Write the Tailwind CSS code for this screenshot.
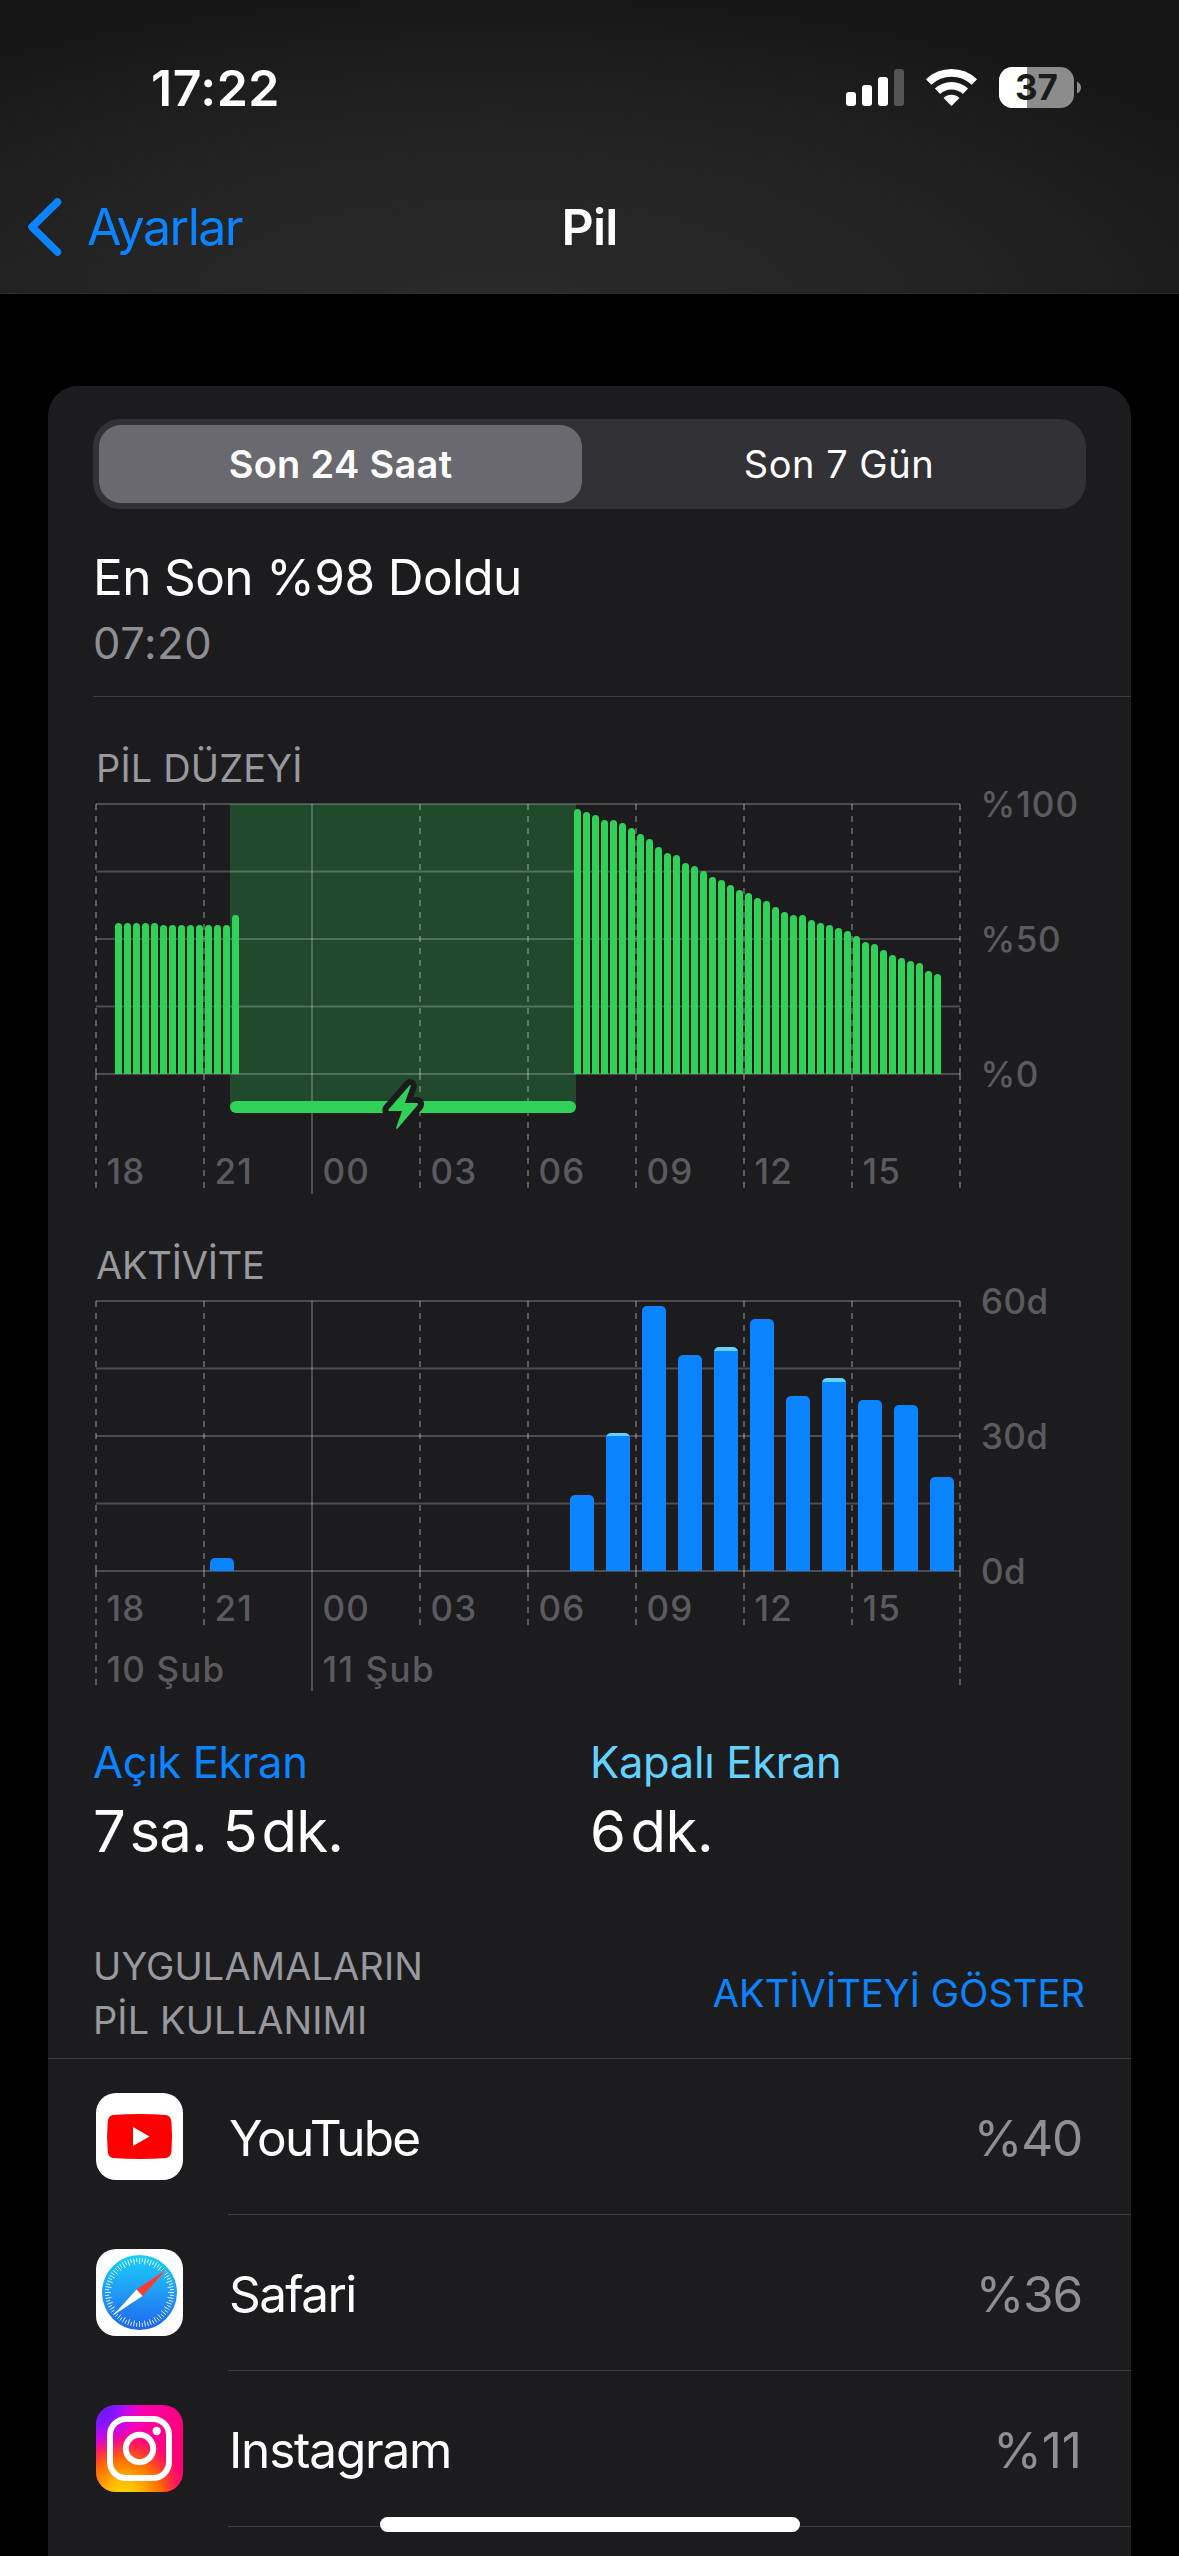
<!DOCTYPE html>
<html lang="tr">
<head>
<meta charset="utf-8">
<title>Pil</title>
<script src="https://cdn.jsdelivr.net/npm/@tailwindcss/browser@4"></script>
</head>
<body class="bg-black">
<div class="relative flex h-[2556px] w-[1179px] flex-col overflow-hidden bg-black font-['Inter',sans-serif] text-white">

  <header class="flex h-[294px] shrink-0 flex-col border-b border-[#2c2c2c] bg-[radial-gradient(ellipse_75%_110%_at_42%_105%,#2a2a2a_0%,#242424_45%,#1b1b1b_85%,#151515_100%)]">
    <div class="flex h-[174px] items-start justify-between pr-[97px] pl-[151px]">
      <span class="pt-[58px] text-[50px] leading-[60px] font-semibold tracking-[0.5px]">17:22</span>
      <svg class="mt-[60px]" width="240" height="60" viewBox="842 60 240 60" fill="#fff">
        <rect x="846" y="92" width="10" height="14" rx="3"/>
        <rect x="862" y="85" width="10" height="21" rx="3"/>
        <rect x="878" y="77" width="10" height="29" rx="3"/>
        <rect x="894" y="69" width="10" height="37" rx="3" fill-opacity=".25"/>
        <path d="M928.600 82a33.200 33.200 0 0 1 45.800 0" fill="none" stroke="#fff" stroke-width="7.600"/>
        <path d="M937.500 91.300a20.300 20.300 0 0 1 28 0" fill="none" stroke="#fff" stroke-width="7.400"/>
        <path d="M951.500 106L943.600 97.900a11.500 11.500 0 0 1 15.800 0z"/>
        <clipPath id="pack"><rect x="999" y="67" width="75" height="41" rx="13.500"/></clipPath>
        <g clip-path="url(#pack)"><rect x="999" y="67" width="75" height="41" fill="#8c8c8c"/><rect x="999" y="67" width="28" height="41"/></g>
        <path d="M1077 81.500q4 2 4 6t-4 6z" fill="#8c8c8c"/>
        <text x="1036.500" y="100.300" text-anchor="middle" font-size="35" font-weight="700" fill="#1b1b1b">37</text>
      </svg>
    </div>
    <nav class="grid grid-cols-3 pt-[23px] text-[50px] leading-[60px]">
      <a class="flex items-center pl-[27px] tracking-[-1.5px] text-[#0a84ff]">
        <svg class="mr-[25px]" width="35" height="60" viewBox="0 0 35 60" fill="none" stroke="currentColor" stroke-width="7.500" stroke-linecap="round" stroke-linejoin="round"><path d="M30.500 5L5 30l25.500 25"/></svg>Ayarlar
      </a>
      <h1 class="text-center font-semibold tracking-[-0.8px]">Pil</h1>
    </nav>
  </header>

  <main class="mx-12 mt-[92px] flex w-[1083px] shrink-0 flex-col rounded-t-[30px] bg-[#1c1c1e] pt-[33px]">
    <div class="mx-[45px] flex h-[90px] rounded-[27px] bg-[#313136] p-[6px] text-[38px] leading-[78px]">
      <div class="w-[483px] rounded-[22px] bg-[#6a696f] text-center font-semibold tracking-[0.3px]">Son 24 Saat</div>
      <div class="flex-1 pl-[16px] text-center tracking-[0.5px]">Son 7 Gün</div>
    </div>
    <h2 class="mt-[38px] ml-[45px] text-[49.5px] leading-[60px] tracking-[-0.6px]">En Son %98 Doldu</h2>
    <p class="mt-[9px] ml-[45px] text-[43.5px] leading-[54px] tracking-[0.6px] text-[#8e8e93]">07:20</p>
    <div class="mt-[26px] ml-[45px] h-px bg-[#3d3d41]"></div>

    <h3 class="mt-[48px] ml-[48px] text-[38px] leading-[46px] tracking-[0.15px] text-[#98989f]">PİL DÜZEYİ</h3>
    <svg id="level" class="ml-[45px] overflow-visible" width="1038" height="409" viewBox="93 791 1038 409"></svg>

    <h3 class="mt-[42px] ml-[48px] text-[38px] leading-[46px] tracking-[-0.2px] text-[#98989f]">AKTİVİTE</h3>
    <svg id="activity" class="ml-[45px] overflow-visible" width="1038" height="404" viewBox="93 1288 1038 404"></svg>

    <div class="mt-[43px] ml-[45px] grid grid-cols-[497px_1fr]">
      <div>
        <p class="text-[43.5px] leading-[54px] tracking-[-0.35px] text-[#0a84ff]">Açık Ekran</p>
        <p class="mt-[7px] text-[58px] leading-[70px] tracking-[-0.8px]">7&#8202;sa. 5&#8202;dk.</p>
      </div>
      <div>
        <p class="text-[43.5px] leading-[54px] tracking-[-0.3px] text-[#64d2ff]">Kapalı Ekran</p>
        <p class="mt-[7px] text-[58px] leading-[70px] tracking-[-0.4px]">6&#8202;dk.</p>
      </div>
    </div>

    <div class="mt-[73px] flex items-center justify-between border-b border-[#3d3d41] pr-[46px] pb-[11px] pl-[45px] text-[38px] leading-[54px] tracking-[0.1px]">
      <h3 class="text-[#98989f]">UYGULAMALARIN<br>PİL KULLANIMI</h3>
      <a class="text-[#0a84ff]">AKTİVİTEYİ GÖSTER</a>
    </div>

    <ul class="text-[49.5px] leading-[60px]">
      <li class="flex h-[156px] items-center gap-[45px] pl-[48px]">
        <svg class="mb-[2px]" width="87" height="87" viewBox="0 0 87 87"><rect width="87" height="87" rx="20" fill="#fff"/><path d="M17 22Q43.500 20 70 22Q75 23 75.500 29Q76.500 43.500 75.500 58Q75 64 70 65Q43.500 67 17 65Q12 64 11.700 58Q10.500 43.500 11.700 29Q12 23 17 22z" fill="#f00"/><path d="M37 34v19l16.500-9.500z" fill="#fff"/></svg>
        <div class="flex h-full flex-1 items-center justify-between border-b border-[#3d3d41] pt-[3px] pr-[49px] pl-[1px]"><span class="tracking-[-1.8px]">YouTube</span><span class="tracking-[-1.2px] text-[#8e8e93]">%40</span></div>
      </li>
      <li class="flex h-[156px] items-center gap-[45px] pl-[48px]">
        <svg class="mb-[2px]" width="87" height="87" viewBox="0 0 87 87">
          <defs><linearGradient id="sky" x2="0" y2="1"><stop stop-color="#19d0fb"/><stop offset=".5" stop-color="#219bf4"/><stop offset="1" stop-color="#1d66ee"/></linearGradient></defs>
          <rect width="87" height="87" rx="20" fill="#fff"/><circle cx="43.500" cy="43.500" r="37.500" fill="url(#sky)"/>
          <g id="ticks" stroke="#fff" stroke-width=".8"></g>
          <path d="M70.500 20.500L40.500 40.500L46.500 47z" fill="#ff3b30"/><path d="M17 66.500L40.500 40.500L46.500 47z" fill="#fff"/>
        </svg>
        <div class="flex h-full flex-1 items-center justify-between border-b border-[#3d3d41] pt-[3px] pr-[49px] pl-px"><span class="tracking-[-1.6px]">Safari</span><span class="tracking-[-1.2px] text-[#8e8e93]">%36</span></div>
      </li>
      <li class="flex h-[156px] items-center gap-[45px] pl-[48px]">
        <svg class="mb-[2px]" width="87" height="87" viewBox="0 0 87 87">
          <defs>
            <linearGradient id="pink" x2="1" y2=".3"><stop stop-color="#e80cf0"/><stop offset=".6" stop-color="#ff00a0"/><stop offset="1" stop-color="#ff0078"/></linearGradient>
            <radialGradient id="violet" cx="0" cy="0" r=".55"><stop stop-color="#5a18ff"/><stop offset=".45" stop-color="#8a14ff"/><stop offset="1" stop-color="#d800f0" stop-opacity="0"/></radialGradient>
            <radialGradient id="sun" cx=".32" cy="1.050" r=".78"><stop stop-color="#ffd800"/><stop offset=".25" stop-color="#ffb800"/><stop offset=".55" stop-color="#ff6a00"/><stop offset=".8" stop-color="#ff1e50" stop-opacity=".8"/><stop offset="1" stop-color="#ff0069" stop-opacity="0"/></radialGradient>
          </defs>
          <rect width="87" height="87" rx="20" fill="url(#pink)"/><rect width="87" height="87" rx="20" fill="url(#sun)"/><rect width="87" height="87" rx="20" fill="url(#violet)"/>
          <g fill="none" stroke="#fff" stroke-width="6"><rect x="14" y="14" width="59" height="59" rx="16"/><circle cx="43.500" cy="43.500" r="13.700"/></g><circle cx="60.700" cy="26" r="4.200" fill="#fff"/>
        </svg>
        <div class="flex h-full flex-1 items-center justify-between border-b border-[#3d3d41] pt-[3px] pr-[49px] pl-px"><span class="tracking-[-1.2px]">Instagram</span><span class="text-[#8e8e93]">%11</span></div>
      </li>
    </ul>
    <div class="h-[40px]"></div>
  </main>

  <div class="absolute top-[2517px] left-[380px] h-[15px] w-[420px] rounded-full bg-white"></div>
</div>

<script>
const LINE = 'rgba(235,235,245,.24)';
const LEFT = 96, RIGHT = 960, HEIGHT = 270;
const HOURS = ['18', '21', '00', '03', '06', '09', '12', '15'];

function grid(top, ends) {
  const base = top + HEIGHT;
  let out = '';
  for (let i = 0; i <= 4; i++) {
    const y = top + i * 67.5;
    out += `<path d="M${LEFT} ${y}H${RIGHT}" stroke="${LINE}" stroke-width="2"/>`;
  }
  for (let i = 0; i <= 8; i++) {
    const x = LEFT + i * 108;
    if (i === 2) out += `<path d="M${x} ${top}V${ends.solid}" stroke="${LINE}" stroke-width="2"/>`;
    else {
      const end = i % 8 ? ends.inner : ends.outer;
      out += `<path d="M${x} ${top}V${base}M${x} ${base}V${end}" stroke="rgba(235,235,245,.3)" stroke-width="2" stroke-dasharray="6 6"/>`;
    }
  }
  return out;
}
function label(x, y, s, spacing = 1.2) {
  return `<text x="${x}" y="${y}" font-size="35" font-weight="500" fill="#5b5b5f" letter-spacing="${spacing}">${s}</text>`;
}
function roundTop(x, y, w, h, r, fill) {
  return `<path d="M${x} ${y + h}V${y + r}a${r} ${r} 0 0 1 ${r} ${-r}h${w - 2 * r}a${r} ${r} 0 0 1 ${r} ${r}V${y + h}z" fill="${fill}"/>`;
}

// Battery level, one sample per 15 minutes
const samples = [
  [2, [56,56,56,56,56,55,55,55,55,55,55,55,55,59]],
  [53, [98,97,96,94,94,93,91,89,87,84,82,81,78,77,75,73,72,70,68,67,65,64,62,60,59,59,57,56,55,54,53,51,49,48,46,44,43,42,41,38,37]]
];
let s = '<rect x="230" y="804" width="346" height="303" fill="#214a2c"/>' + grid(804, { inner: 1188, outer: 1188, solid: 1194 });
for (const [start, list] of samples)
  list.forEach((v, i) => { const h = Math.round(v * 2.7); s += roundTop(LEFT + 1 + 9 * (start + i), 1074 - h, 7, h, 3.5, '#30d158'); });
s += '<rect x="230" y="1101" width="346" height="12" rx="6" fill="#30d158"/>';
const bolt = 'M409.500 1085.500L388.500 1109.500Q388 1111 389.500 1111H402L396 1128Q396.500 1129.500 397.500 1128.500L417.800 1105Q418.500 1103 417 1103H404.800L410.800 1086Q410.500 1084.500 409.500 1085.500z';
s += `<clipPath id="cut"><rect x="370" y="1070" width="70" height="43"/></clipPath><path d="${bolt}" fill="#1c1c1e" stroke="#1c1c1e" stroke-width="12" stroke-linejoin="round" clip-path="url(#cut)"/><path d="${bolt}" fill="#30d158"/>`;
HOURS.forEach((h, i) => s += label(LEFT + 10.5 + i * 108, 1184, h));
s += label(980.5, 817, '%100', 1) + label(980.5, 952, '%50', .6) + label(980.5, 1087, '%0', .6);
document.getElementById('level').innerHTML = s;

// Activity minutes per hour: [hour slot, screen on, top including screen off (px)]
const minutes = [[3,13],[13,76],[14,135,138],[15,265],[16,216],[17,220,224],[18,252],[19,175],[20,189,193],[21,171],[22,166],[23,94]];
let a = grid(1301, { inner: 1625, outer: 1685, solid: 1691 });
for (const [slot, on, total] of minutes) {
  const x = LEFT + 6 + slot * 36;
  if (total) a += roundTop(x, 1571 - total, 24, total, 5, '#64d2ff') + `<rect x="${x}" y="${1571 - on}" width="24" height="${on}" fill="#0a84ff"/>`;
  else a += roundTop(x, 1571 - on, 24, on, 5, '#0a84ff');
}
HOURS.forEach((h, i) => a += label(LEFT + 10.5 + i * 108, 1621, h));
a += label(106.5, 1682, '10 Şub') + label(322.5, 1682, '11 Şub', 1.5);
a += label(981, 1314, '60d', .4) + label(981, 1449, '30d', .4) + label(981, 1584, '0d', .4);
document.getElementById('activity').innerHTML = a;

// Compass bezel
let t = '';
for (let i = 0; i < 72; i++) t += `<path d="M43.500 9V${i % 2 ? 13 : 15}" transform="rotate(${i * 5} 43.500 43.500)"/>`;
document.getElementById('ticks').innerHTML = t;
</script>
</body>
</html>
